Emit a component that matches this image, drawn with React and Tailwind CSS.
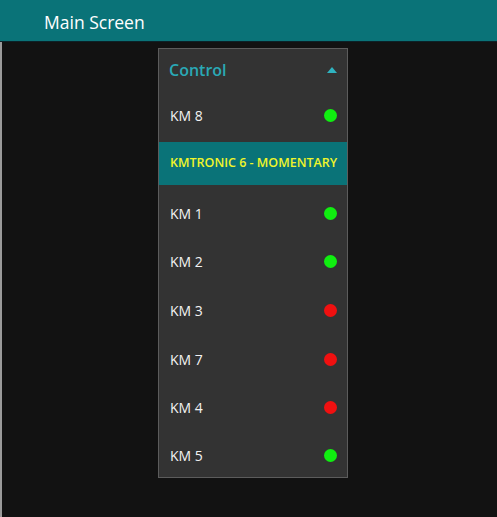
const items = [
  { name: "KM 8", on: true },
  { name: "KMTRONIC 6 - MOMENTARY", selected: true },
  { name: "KM 1", on: true },
  { name: "KM 2", on: true },
  { name: "KM 3", on: false },
  { name: "KM 7", on: false },
  { name: "KM 4", on: false },
  { name: "KM 5", on: true },
];

export default function App() {
  return (
    <div
      className="w-[497px] h-[517px] bg-[#121212] flex flex-col overflow-hidden"
      style={{ fontFamily: '"Open Sans", "Noto Sans", sans-serif' }}
    >
      {/* Title bar */}
      <div className="h-[42px] bg-[#0a7378] flex items-center pl-[44px] pt-[3px] border-b border-[#0b2228] shrink-0">
        <span className="text-white text-[17.5px]">Main Screen</span>
      </div>

      <div className="flex-1 border-l-2 border-[#9a9a9a] pt-[6px] pl-[156px]">
        {/* Dropdown panel */}
        <div className="w-[190px] bg-[#333333] border border-[#5c5c5c] flex flex-col">
          <div className="h-[42px] flex items-center justify-between pl-[10px] pr-[10px]">
            <span className="text-[#2aa9b6] text-[16px] font-semibold">Control</span>
            <svg width="10" height="6" viewBox="0 0 10 6">
              <polygon points="0,6 5,0 10,6" fill="#2fb3c0" />
            </svg>
          </div>
          {items.map((it, i) =>
            it.selected ? (
              <div
                key={it.name}
                className="h-[43px] mt-[2px] mb-[4px] bg-[#0a7378] flex items-center pl-[11px]"
              >
                <span className="text-[#f0f52a] text-[12.5px] font-semibold">{it.name}</span>
              </div>
            ) : (
              <div
                key={it.name}
                className={
                  "flex items-center justify-between pl-[11px] pr-[10px] " +
                  (i === items.length - 1 ? "h-[44.7px] pt-[3px]" : "h-[48.7px]")
                }
              >
                <span className="text-[#f2f2f2] text-[14px]">{it.name}</span>
                <span
                  className={
                    "w-[13px] h-[13px] rounded-full " +
                    (it.on ? "bg-[#10ee10]" : "bg-[#f01010]")
                  }
                />
              </div>
            )
          )}
        </div>
      </div>
    </div>
  );
}
